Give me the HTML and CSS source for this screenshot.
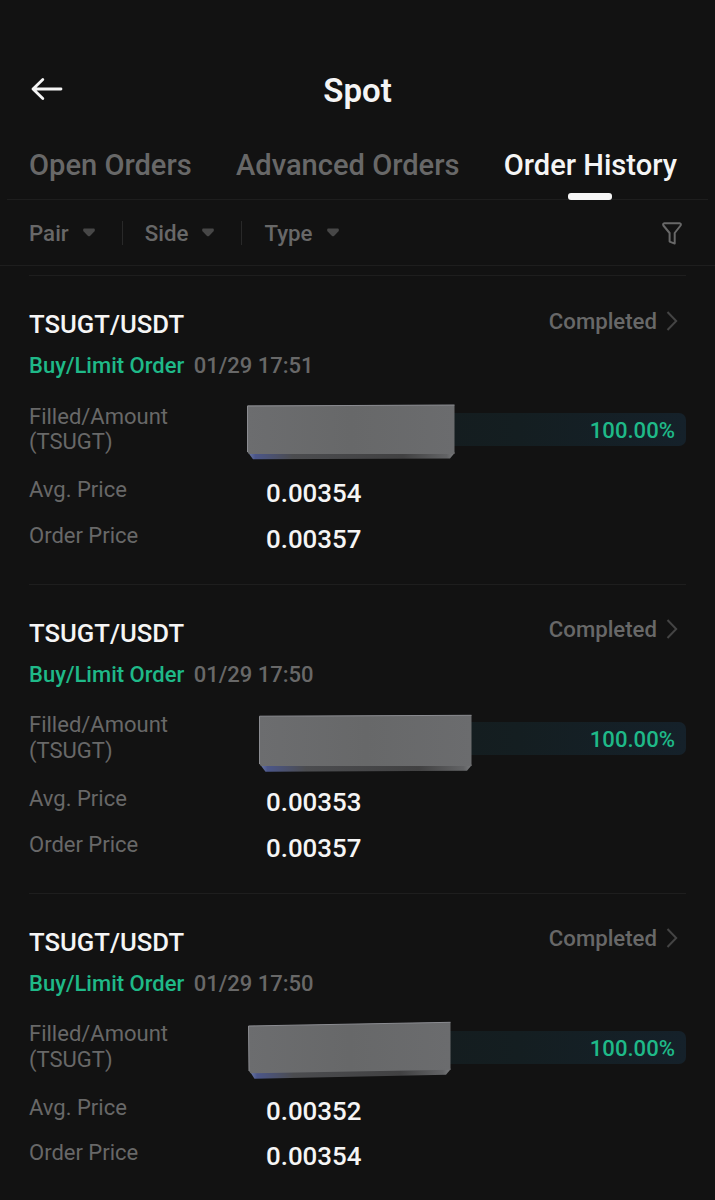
FILE: index.html
```html
<!DOCTYPE html>
<html lang="en">
<head>
    <meta charset="UTF-8">
    <meta name="viewport" content="width=device-width, initial-scale=1.0">
    <title>Spot - Order History</title>
    <link rel="stylesheet" href="styles.css">
</head>
<body>
    <!-- Shared gradients for the cover plates -->
    <svg class="defs" width="0" height="0">
        <defs>
            <linearGradient id="face" x1="0" y1="0" x2="1" y2="0">
                <stop offset="0" stop-color="#6c6d6f"/>
                <stop offset="0.5" stop-color="#676869"/>
                <stop offset="1" stop-color="#6b6c6e"/>
            </linearGradient>
            <linearGradient id="edge" x1="0" y1="0" x2="1" y2="0">
                <stop offset="0" stop-color="#7280a8"/>
                <stop offset="0.04" stop-color="#4b568a"/>
                <stop offset="0.22" stop-color="#4b4c4f"/>
                <stop offset="0.75" stop-color="#414142"/>
                <stop offset="0.96" stop-color="#626365"/>
                <stop offset="1" stop-color="#7b7c7e"/>
            </linearGradient>
        </defs>
    </svg>

    <header class="top-bar">
        <svg class="back" width="32" height="24" viewBox="0 0 32 24" fill="none" stroke="#f5f5f5" stroke-width="2.8" stroke-linecap="round" stroke-linejoin="round">
            <path d="M30 12H2M11.8 2.4L2 12l9.8 9.6"/>
        </svg>
        <h1>Spot</h1>
    </header>

    <nav class="tabs">
        <a class="tab">Open Orders</a>
        <a class="tab">Advanced Orders</a>
        <a class="tab active">Order History</a>
    </nav>

    <div class="filters">
        <div class="filter">Pair <svg width="12" height="9" viewBox="0 0 12 9"><path d="M1.2 0.5h9.6q1 0 1 1v1.6L7 7.9q-1 .8-2 0L.2 3.1V1.5q0-1 1-1z"/></svg></div>
        <div class="filter">Side <svg width="12" height="9" viewBox="0 0 12 9"><path d="M1.2 0.5h9.6q1 0 1 1v1.6L7 7.9q-1 .8-2 0L.2 3.1V1.5q0-1 1-1z"/></svg></div>
        <div class="filter">Type <svg width="12" height="9" viewBox="0 0 12 9"><path d="M1.2 0.5h9.6q1 0 1 1v1.6L7 7.9q-1 .8-2 0L.2 3.1V1.5q0-1 1-1z"/></svg></div>
        <svg class="funnel" width="20" height="23" viewBox="0 0 20 23" fill="none" stroke="#686868" stroke-width="2" stroke-linejoin="round">
            <path d="M2.4 1.2h15.2q1.800.3 1 2.3L12.700 11v10.600L7.600 19.600V11L1.400 3.500q-.8-2 1-2.300z"/>
        </svg>
    </div>

    <main class="orders">
        <section class="order">
            <div class="order-head">
                <h2>TSUGT/USDT</h2>
                <div class="status">Completed <svg width="12" height="20" viewBox="0 0 12 20"><path d="M1.5 1l8.7 9-8.7 9"/></svg></div>
            </div>
            <div class="order-sub"><span class="side">Buy/Limit Order</span><span class="date">01/29 17:51</span></div>
            <div class="row filled">
                <div class="label">Filled/Amount (TSUGT)</div>
                <div class="progress">
                    <span>100.00%</span>
                    <svg class="plate" width="240" height="70" viewBox="0 0 240 70">
                        <path fill="url(#edge)" d="M7 55l6 8.3L210 62.5l5-6z"/>
                        <path class="face" fill="url(#face)" d="M7.5 9.5L214.5 9V58H9L7.5 56z"/>
                        <path class="shine" d="M7.5 56V10L214.5 9"/>
                    </svg>
                </div>
            </div>
            <div class="row">
                <div class="label">Avg. Price</div>
                <div class="value">0.00354</div>
            </div>
            <div class="row">
                <div class="label">Order Price</div>
                <div class="value">0.00357</div>
            </div>
        </section>

        <section class="order">
            <div class="order-head">
                <h2>TSUGT/USDT</h2>
                <div class="status">Completed <svg width="12" height="20" viewBox="0 0 12 20"><path d="M1.5 1l8.7 9-8.7 9"/></svg></div>
            </div>
            <div class="order-sub"><span class="side">Buy/Limit Order</span><span class="date">01/29 17:50</span></div>
            <div class="row filled">
                <div class="label">Filled/Amount (TSUGT)</div>
                <div class="progress">
                    <span>100.00%</span>
                    <svg class="plate" width="240" height="70" viewBox="0 0 240 70">
                        <path fill="url(#edge)" d="M19 58l6.5 8.7L227 65.7l5-6z"/>
                        <path class="face" fill="url(#face)" d="M19.5 11.2L231.5 10.3V61H21L19.5 59z"/>
                        <path class="shine" d="M19.5 59V11.2L231.5 10.3"/>
                    </svg>
                </div>
            </div>
            <div class="row">
                <div class="label">Avg. Price</div>
                <div class="value">0.00353</div>
            </div>
            <div class="row">
                <div class="label">Order Price</div>
                <div class="value">0.00357</div>
            </div>
        </section>

        <section class="order">
            <div class="order-head">
                <h2>TSUGT/USDT</h2>
                <div class="status">Completed <svg width="12" height="20" viewBox="0 0 12 20"><path d="M1.5 1l8.7 9-8.7 9"/></svg></div>
            </div>
            <div class="order-sub"><span class="side">Buy/Limit Order</span><span class="date">01/29 17:50</span></div>
            <div class="row filled">
                <div class="label">Filled/Amount (TSUGT)</div>
                <div class="progress">
                    <span>100.00%</span>
                    <svg class="plate" width="240" height="70" viewBox="0 0 240 70">
                        <path fill="url(#edge)" d="M9 56l5.5 8.7L206 60.7l5-6z"/>
                        <path class="face" fill="url(#face)" d="M8.5 12L210.5 8.3V55.7L10.5 59.2 9 57z"/>
                        <path class="shine" d="M9 57L8.5 12L210.5 8.3"/>
                    </svg>
                </div>
            </div>
            <div class="row">
                <div class="label">Avg. Price</div>
                <div class="value">0.00352</div>
            </div>
            <div class="row">
                <div class="label">Order Price</div>
                <div class="value">0.00354</div>
            </div>
        </section>
    </main>
</body>
</html>
```

FILE: styles.css
```css
:root {
    --bg: #121212;
    --text: #f5f5f5;
    --muted: #686868;
    --line: #1e1e1e;
    --green: #1fb988;
}

* {
    box-sizing: border-box;
}

body {
    margin: 0;
    height: 1200px;
    overflow: hidden;
    background-color: var(--bg);
    color: var(--text);
    font-family: Roboto, sans-serif;
    font-weight: 500;
}

h1, h2 {
    margin: 0;
    font-weight: 500;
}

svg {
    display: block;
    flex: none;
}

.defs {
    position: absolute;
}

.top-bar {
    display: grid;
    grid-template-columns: 32px 1fr 32px;
    align-items: center;
    height: 60px;
    margin-top: 60px;
    padding: 0 31px;
}

.back {
    margin-top: -2px;
}

h1 {
    padding-top: 2px;
    font-size: 33px;
    font-weight: 600;
    line-height: 40px;
    text-align: center;
}

.tabs {
    display: flex;
    justify-content: space-between;
    height: 80px;
    margin: 0 7px;
    padding: 25px 31px 0 22px;
    border-bottom: 1px solid var(--line);
}

.tab {
    position: relative;
    font-size: 29.1px;
    line-height: 40px;
    color: var(--muted);
    white-space: nowrap;
}

.tab.active {
    color: var(--text);
}

.tab.active::after {
    content: "";
    position: absolute;
    left: 50%;
    bottom: -1px;
    width: 44px;
    height: 7px;
    margin-left: -22px;
    border-radius: 3px;
    background-color: var(--text);
}

.filters {
    display: flex;
    align-items: center;
    height: 66px;
    padding: 0 33px 0 29px;
    border-bottom: 1px solid var(--line);
    font-size: 22.3px;
    color: var(--muted);
}

.filter {
    display: flex;
    align-items: center;
    gap: 14px;
    line-height: 24px;
}

.filter svg {
    fill: #474747;
}

.filter + .filter {
    margin-left: 27px;
    padding-left: 22px;
    border-left: 1px solid #292929;
}

.funnel {
    margin-top: 2px;
    margin-left: auto;
}

.orders {
    padding: 9px 29px 0;
}

.order {
    height: 308.8px;
    padding-top: 33px;
    border-top: 1px solid var(--line);
}

.order-head {
    display: flex;
    justify-content: space-between;
    height: 30px;
}

h2 {
    font-size: 25.7px;
    line-height: 30px;
}

.status {
    display: flex;
    align-items: center;
    gap: 9px;
    height: 23px;
    padding-right: 8px;
    font-size: 22.2px;
    color: var(--muted);
}

.status svg {
    fill: none;
    stroke: #444;
    stroke-width: 2;
}

.order-sub {
    display: flex;
    gap: 9.5px;
    margin-top: 13px;
    font-size: 22px;
    line-height: 28px;
}

.side {
    color: var(--green);
}

.date {
    color: var(--muted);
}

.row {
    display: grid;
    grid-template-columns: 237px 1fr;
    height: 45.7px;
}

.row.filled {
    height: 73.5px;
    margin-top: 23.7px;
}

.label {
    width: 170px;
    font-size: 22px;
    font-weight: 400;
    line-height: 25.7px;
    color: var(--muted);
}

.value {
    padding-top: 1px;
    font-size: 25.9px;
    line-height: 30px;
}

.progress {
    position: relative;
    height: 33px;
    margin-top: 9.3px;
    padding-right: 11px;
    border-radius: 7px;
    background: linear-gradient(90deg, #151a1b, #141e21 60%, #15212a);
    font-size: 22.1px;
    line-height: 34px;
    text-align: right;
    color: var(--green);
}

/* Plate that hides the filled amount, overhanging the bar */
.plate {
    position: absolute;
    left: -26px;
    top: -17px;
}

.shine {
    fill: none;
    stroke: #8b8c91;
    stroke-width: 1;
}
```
